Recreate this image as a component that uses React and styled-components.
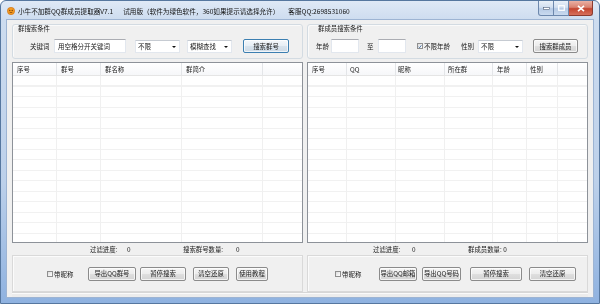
import React from "react";
import styled, { createGlobalStyle } from "styled-components";

const FONT = `"Noto Sans CJK SC", "Liberation Sans", sans-serif`;

const GlobalStyle = createGlobalStyle`
  html, body { margin: 0; padding: 0; background: #ffffff; }
  body { font-family: ${FONT}; }
  * { box-sizing: border-box; }
`;

const Window = styled.div`
  width: 600px;
  height: 304px;
  display: flex;
  flex-direction: column;
  border: 1px solid #56779f;
  border-radius: 6px 6px 0 0;
  padding: 0 6px 6px;
  background: linear-gradient(to bottom, #dfe9f6 0px, #cddcef 19px, #bcd0ea 60%, #8fb2e0 100%);
  font-family: ${FONT};
  color: #1a1a1a;
  overflow: hidden;
  will-change: transform;
`;

const TitleBar = styled.div`
  height: 19px;
  display: flex;
  align-items: center;
  font-size: 6.6px;
  color: #111;
  white-space: nowrap;
`;

const AppIcon = styled.svg`
  width: 8px;
  height: 8px;
  margin-right: 3px;
  flex: none;
`;

const TitlePart = styled.span`
  margin-left: ${(p) => p.$ml || 0}px;
`;

const Caption = styled.div`
  margin-left: auto;
  align-self: flex-start;
  display: flex;
  height: 15px;
`;

const CapBtn = styled.div`
  width: ${(p) => p.$w}px;
  height: 15px;
  display: flex;
  align-items: center;
  justify-content: center;
  border: 1px solid ${(p) => (p.$close ? "#8c3b2f" : "#6d88ad")};
  border-top: none;
  border-left: ${(p) => (p.$first ? "1px" : "0")} solid #6d88ad;
  border-radius: ${(p) => (p.$first ? "0 0 0 3px" : p.$close ? "0 0 3px 0" : "0")};
  background: ${(p) =>
    p.$close
      ? "linear-gradient(to bottom, #eab1a4 0%, #d98270 45%, #c4452f 55%, #d6705c 100%)"
      : "linear-gradient(to bottom, #e9f0f8 0%, #d2dff0 45%, #b6cae5 55%, #c9daef 100%)"};
`;

const Client = styled.div`
  flex: 1;
  display: flex;
  flex-direction: column;
  background: #f0f0f0;
  box-shadow: 0 0 0 1px #9db4d3;
  padding: 4px 5px 0;
`;

const Columns = styled.div`
  display: flex;
  gap: 4px;
  height: 268px;
`;

const Column = styled.div`
  width: ${(p) => p.$w}px;
  display: flex;
  flex-direction: column;
`;

const GroupBox = styled.div`
  height: 35px;
  border: 1px solid #d3dbe2;
  border-radius: 3px;
  box-shadow: inset 1px 1px 0 #fafafa;
`;

const GroupTitle = styled.div`
  height: 8px;
  line-height: 8px;
  font-size: 6.4px;
  padding-left: ${(p) => p.$pl}px;
`;

const Row = styled.div`
  display: flex;
  align-items: center;
  height: 14px;
  margin-top: ${(p) => p.$mt || 0}px;
`;

const Label = styled.span`
  flex: none;
  width: ${(p) => (p.$w ? `${p.$w}px` : "auto")};
  margin-left: ${(p) => p.$ml || 0}px;
  font-size: 6.5px;
  line-height: 14px;
  white-space: nowrap;
`;

const TextBox = styled.div`
  flex: none;
  width: ${(p) => p.$w}px;
  height: 14px;
  margin-left: ${(p) => p.$ml || 0}px;
  background: #fff;
  border: 1px solid #e2e7ee;
  border-top-color: #abadb3;
  font-size: 6.5px;
  line-height: 12px;
  padding-left: 3px;
  white-space: nowrap;
`;

const Combo = styled.div`
  flex: none;
  position: relative;
  width: ${(p) => p.$w}px;
  height: 13px;
  margin-left: ${(p) => p.$ml || 0}px;
  background: #fff;
  border: 1px solid #e2e7ee;
  border-top-color: #c6cbd2;
  font-size: 6.5px;
  line-height: 11px;
  padding-left: 2px;
  &::after {
    content: "";
    position: absolute;
    right: 3px;
    top: 5px;
    border-left: 2px solid transparent;
    border-right: 2px solid transparent;
    border-top: 2px solid #111;
  }
`;

const Button = styled.div`
  flex: none;
  width: ${(p) => p.$w}px;
  height: 14px;
  margin-left: ${(p) => p.$ml || 0}px;
  display: flex;
  align-items: center;
  justify-content: center;
  font-size: 6.4px;
  white-space: nowrap;
  border: 1px solid ${(p) => (p.$default ? "#3c7fb1" : "#8b8b8b")};
  border-radius: 2px;
  background: ${(p) =>
    p.$default
      ? "linear-gradient(to bottom, #f4f8fb 0%, #e6eef5 50%, #d8e3ed 51%, #cddae6 100%)"
      : "linear-gradient(to bottom, #f6f6f6 0%, #ececec 50%, #dfdfdf 51%, #d4d4d4 100%)"};
  box-shadow: inset 0 0 0 1px rgba(255, 255, 255, 0.7);
`;

const CheckBox = styled.div`
  flex: none;
  width: 6px;
  height: 6px;
  margin-left: ${(p) => p.$ml || 0}px;
  border: 1px solid #8f8f8f;
  background: linear-gradient(135deg, #dcdcdc, #ffffff);
  display: flex;
  align-items: center;
  justify-content: center;
`;

const ListView = styled.div`
  height: 181px;
  margin-top: 3px;
  border: 1px solid #8d9299;
  background: #fff;
  display: flex;
  flex-direction: column;
`;

const Header = styled.div`
  display: flex;
  height: 13px;
  flex: none;
  border-bottom: 1px solid #e5e5e5;
  background: linear-gradient(to bottom, #ffffff, #f6f7f9);
`;

const HeadCell = styled.div`
  flex: none;
  width: ${(p) => p.$w}px;
  border-right: 1px solid #e3e5e8;
  font-size: 6.4px;
  line-height: 13px;
  padding-left: ${(p) => p.$pl || 4}px;
  white-space: nowrap;
  color: #222;
`;

const Body = styled.div`
  flex: 1;
  display: flex;
  background: repeating-linear-gradient(
    to bottom,
    transparent 0px,
    transparent 9.5px,
    #f1f1f1 9.5px,
    #f1f1f1 10.5px
  );
`;

const BodyCol = styled.div`
  flex: none;
  width: ${(p) => p.$w}px;
  border-right: 1px solid #f0f0f0;
`;

const Status = styled.div`
  height: 12px;
  display: flex;
  align-items: center;
  font-size: 6.4px;
  white-space: nowrap;
  color: #1a1a1a;
`;

const StatItem = styled.span`
  flex: none;
  width: ${(p) => (p.$w ? `${p.$w}px` : "auto")};
  margin-left: ${(p) => p.$ml || 0}px;
`;

const Panel = styled.div`
  height: 37px;
  border: 1px solid #d9d9d9;
  box-shadow: inset 1px 1px 0 #fbfbfb;
  display: flex;
  align-items: center;
`;

const Footer = styled.div`
  flex: 1;
  border-top: 1px solid #d6d6d6;
  box-shadow: inset 0 1px 0 #fafafa;
  background: #ececec;
`;

const Check = () => (
  <svg width="5" height="5" viewBox="0 0 10 10">
    <path d="M1.5 5.5 L4 8 L8.5 2" fill="none" stroke="#2a5d9a" strokeWidth="2" />
  </svg>
);

const leftCols = [
  { w: 44, t: "序号" },
  { w: 44, t: "群号" },
  { w: 81, t: "群名称" },
  { w: 81, t: "群简介" },
];

const rightCols = [
  { w: 39, t: "序号" },
  { w: 49, t: "QQ", pl: 3 },
  { w: 49, t: "昵称", pl: 2 },
  { w: 48, t: "所在群", pl: 3 },
  { w: 34, t: "年龄", pl: 4 },
  { w: 31, t: "性别", pl: 3 },
];

const List = ({ cols }) => (
  <ListView>
    <Header>
      {cols.map((c) => (
        <HeadCell key={c.t} $w={c.w} $pl={c.pl}>
          {c.t}
        </HeadCell>
      ))}
    </Header>
    <Body>
      {cols.map((c) => (
        <BodyCol key={c.t} $w={c.w} />
      ))}
    </Body>
  </ListView>
);

export default function App() {
  return (
    <>
      <GlobalStyle />
      <Window>
        <TitleBar>
          <AppIcon viewBox="0 0 10 10">
            <circle cx="5" cy="5" r="4.6" fill="#f39a21" stroke="#c4610d" strokeWidth="0.6" />
            <circle cx="3.5" cy="4.2" r="0.8" fill="#5a2a00" />
            <circle cx="6.5" cy="4.2" r="0.8" fill="#5a2a00" />
            <path d="M3.2 6.4 Q5 7.8 6.8 6.4" fill="none" stroke="#5a2a00" strokeWidth="0.7" />
          </AppIcon>
          <TitlePart>小牛不加群QQ群成员提取器V7.1</TitlePart>
          <TitlePart $ml={10}>试用版（软件为绿色软件，360如果提示请选择允许）</TitlePart>
          <TitlePart $ml={9}>客服QQ:2698531060</TitlePart>
          <Caption>
            <CapBtn $w={16} $first>
              <svg width="7" height="3" viewBox="0 0 7 3">
                <rect x="0.5" y="0.5" width="6" height="2" fill="#fff" stroke="#50607a" strokeWidth="0.6" />
              </svg>
            </CapBtn>
            <CapBtn $w={15}>
              <svg width="7" height="6" viewBox="0 0 7 6">
                <rect x="0.7" y="0.7" width="5.6" height="4.6" fill="none" stroke="#fff" strokeWidth="1.2" />
              </svg>
            </CapBtn>
            <CapBtn $w={24} $close>
              <svg width="8" height="7" viewBox="0 0 8 7">
                <path d="M1 0.8 L7 6.2 M7 0.8 L1 6.2" stroke="#fff" strokeWidth="1.6" />
              </svg>
            </CapBtn>
          </Caption>
        </TitleBar>
        <Client>
          <Columns>
            <Column $w={291}>
              <GroupBox>
                <GroupTitle $pl={5}>群搜索条件</GroupTitle>
                <Row $mt={6}>
                  <Label $ml={17} $w={20}>关键词</Label>
                  <TextBox $ml={4} $w={72}>用空格分开关键词</TextBox>
                  <Combo $ml={9} $w={45}>不限</Combo>
                  <Combo $ml={7} $w={45}>模糊查找</Combo>
                  <Button $ml={11} $w={46} $default>搜索群号</Button>
                </Row>
              </GroupBox>
              <List cols={leftCols} />
              <Status>
                <StatItem $ml={78} $w={37}>过滤进度:</StatItem>
                <StatItem $w={56}>0</StatItem>
                <StatItem $w={53}>搜索群号数量:</StatItem>
                <StatItem>0</StatItem>
              </Status>
              <Panel>
                <CheckBox $ml={34} />
                <Label $ml={1} $w={20}>带昵称</Label>
                <Button $ml={14} $w={48}>导出QQ群号</Button>
                <Button $ml={4} $w={46}>暂停搜索</Button>
                <Button $ml={7} $w={36}>清空还原</Button>
                <Button $ml={7} $w={32}>使用教程</Button>
              </Panel>
            </Column>
            <Column $w={281}>
              <GroupBox>
                <GroupTitle $pl={10}>群成员搜索条件</GroupTitle>
                <Row $mt={6}>
                  <Label $ml={8} $w={13}>年龄</Label>
                  <TextBox $ml={2} $w={28} />
                  <Label $ml={8} $w={7}>至</Label>
                  <TextBox $ml={4} $w={28} />
                  <CheckBox $ml={11}>
                    <Check />
                  </CheckBox>
                  <Label $ml={1} $w={27}>不限年龄</Label>
                  <Label $ml={10} $w={13}>性别</Label>
                  <Combo $ml={4} $w={45}>不限</Combo>
                  <Button $ml={10} $w={45}>搜索群成员</Button>
                </Row>
              </GroupBox>
              <List cols={rightCols} />
              <Status>
                <StatItem $ml={66} $w={39}>过滤进度:</StatItem>
                <StatItem $w={56}>0</StatItem>
                <StatItem>群成员数量: 0</StatItem>
              </Status>
              <Panel>
                <CheckBox $ml={27} />
                <Label $ml={1} $w={24}>带昵称</Label>
                <Button $ml={13} $w={38}>导出QQ邮箱</Button>
                <Button $ml={5} $w={39}>导出QQ号码</Button>
                <Button $ml={9} $w={52}>暂停搜索</Button>
                <Button $ml={7} $w={47}>清空还原</Button>
              </Panel>
            </Column>
          </Columns>
          <Footer />
        </Client>
      </Window>
    </>
  );
}
